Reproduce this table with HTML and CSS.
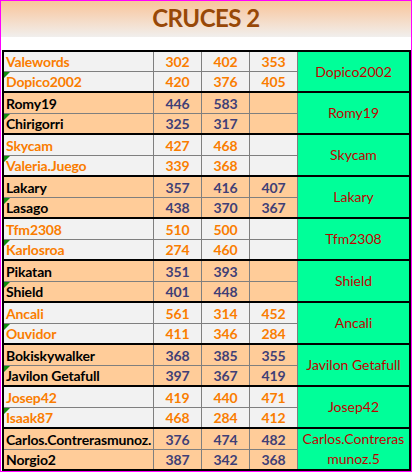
FILE: index.html
```html
<!DOCTYPE html>
<html lang="es">
<head>
<meta charset="utf-8">
<title>CRUCES 2</title>
<link rel="stylesheet" href="styles.css">
</head>
<body>
<div class="frame">
  <header class="title-band"><h1 class="title">CRUCES 2</h1></header>
  <div class="board">
    <div class="pair calc first">
      <div class="name">Valewords</div><div class="num">302</div><div class="num">402</div><div class="num">353</div>
      <div class="result">Dopico2002</div>
      <div class="name flag">Dopico2002</div><div class="num">420</div><div class="num">376</div><div class="num">405</div>
    </div>
    <div class="pair input">
      <div class="name">Romy19</div><div class="num">446</div><div class="num">583</div><div class="num"></div>
      <div class="result">Romy19</div>
      <div class="name flag">Chirigorri</div><div class="num">325</div><div class="num">317</div><div class="num"></div>
    </div>
    <div class="pair calc">
      <div class="name">Skycam</div><div class="num">427</div><div class="num">468</div><div class="num"></div>
      <div class="result">Skycam</div>
      <div class="name flag">Valeria.Juego</div><div class="num">339</div><div class="num">368</div><div class="num"></div>
    </div>
    <div class="pair input">
      <div class="name">Lakary</div><div class="num">357</div><div class="num">416</div><div class="num">407</div>
      <div class="result">Lakary</div>
      <div class="name flag">Lasago</div><div class="num">438</div><div class="num">370</div><div class="num">367</div>
    </div>
    <div class="pair calc">
      <div class="name">Tfm2308</div><div class="num">510</div><div class="num">500</div><div class="num"></div>
      <div class="result">Tfm2308</div>
      <div class="name flag">Karlosroa</div><div class="num">274</div><div class="num">460</div><div class="num"></div>
    </div>
    <div class="pair input">
      <div class="name">Pikatan</div><div class="num">351</div><div class="num">393</div><div class="num"></div>
      <div class="result">Shield</div>
      <div class="name flag">Shield</div><div class="num">401</div><div class="num">448</div><div class="num"></div>
    </div>
    <div class="pair calc">
      <div class="name">Ancali</div><div class="num">561</div><div class="num">314</div><div class="num">452</div>
      <div class="result">Ancali</div>
      <div class="name flag">Ouvidor</div><div class="num">411</div><div class="num">346</div><div class="num">284</div>
    </div>
    <div class="pair input">
      <div class="name">Bokiskywalker</div><div class="num">368</div><div class="num">385</div><div class="num">355</div>
      <div class="result">Javilon Getafull</div>
      <div class="name flag">Javilon Getafull</div><div class="num">397</div><div class="num">367</div><div class="num">419</div>
    </div>
    <div class="pair calc">
      <div class="name">Josep42</div><div class="num">419</div><div class="num">440</div><div class="num">471</div>
      <div class="result">Josep42</div>
      <div class="name flag">Isaak87</div><div class="num">468</div><div class="num">284</div><div class="num">412</div>
    </div>
    <div class="pair input">
      <div class="name">Carlos.Contrerasmunoz.</div><div class="num">376</div><div class="num">474</div><div class="num">482</div>
      <div class="result">Carlos.Contreras munoz.5</div>
      <div class="name">Norgio2</div><div class="num">387</div><div class="num">342</div><div class="num">368</div>
    </div>
  </div>
</div>
</body>
</html>
```

FILE: styles.css
```css
* { box-sizing: border-box; }
html, body { margin: 0; padding: 0; background: #ffffff; }
body { font-family: Lato, "Open Sans", sans-serif; }

.frame {
  width: 412px;
  height: 472px;
  border: 1px solid #ff00ff;
  background: #ffffff;
}

.title-band {
  height: 36px;
  background: linear-gradient(to bottom, #f9c49a, #f1efed);
}

.title {
  margin: 0;
  font-size: 24px;
  letter-spacing: -0.5px;
  line-height: 33px;
  font-weight: 700;
  color: #984807;
  text-align: center;
}

.board {
  width: 409px;
  margin: 13px 0 0 1px;
  border: 2px solid #000;
  border-top: none;
}

.pair {
  display: grid;
  grid-template-columns: 149px 47px 47px 47px 111px;
  grid-template-rows: 20px 19px;
  gap: 1px;
  background: #7f7f7f;
  border-top: 2px solid #000;
}
.pair.first { grid-template-rows: 19px 19px; }

.pair > div {
  display: flex;
  align-items: center;
  font-size: 14px;
  letter-spacing: -0.15px;
  font-weight: 700;
  white-space: nowrap;
  overflow: hidden;
}

.calc > div { background: #f2f2f2; color: #fa7d00; }
.input > div { background: #ffcc99; color: #3f3f76; }
.input > .name { color: #000; }

.name { padding-left: 2px; position: relative; }
.num { justify-content: center; }

.flag::before {
  content: "";
  position: absolute;
  left: 0;
  top: 0;
  border-top: 6px solid #118a11;
  border-right: 6px solid transparent;
}

.pair > .result {
  grid-column: 5;
  grid-row: 1 / span 2;
  background: #00ff99;
  color: #c00000;
  font-weight: 400;
  font-size: 14px;
  letter-spacing: 0;
  justify-content: center;
  text-align: center;
  white-space: normal;
  line-height: 20px;
}
```
